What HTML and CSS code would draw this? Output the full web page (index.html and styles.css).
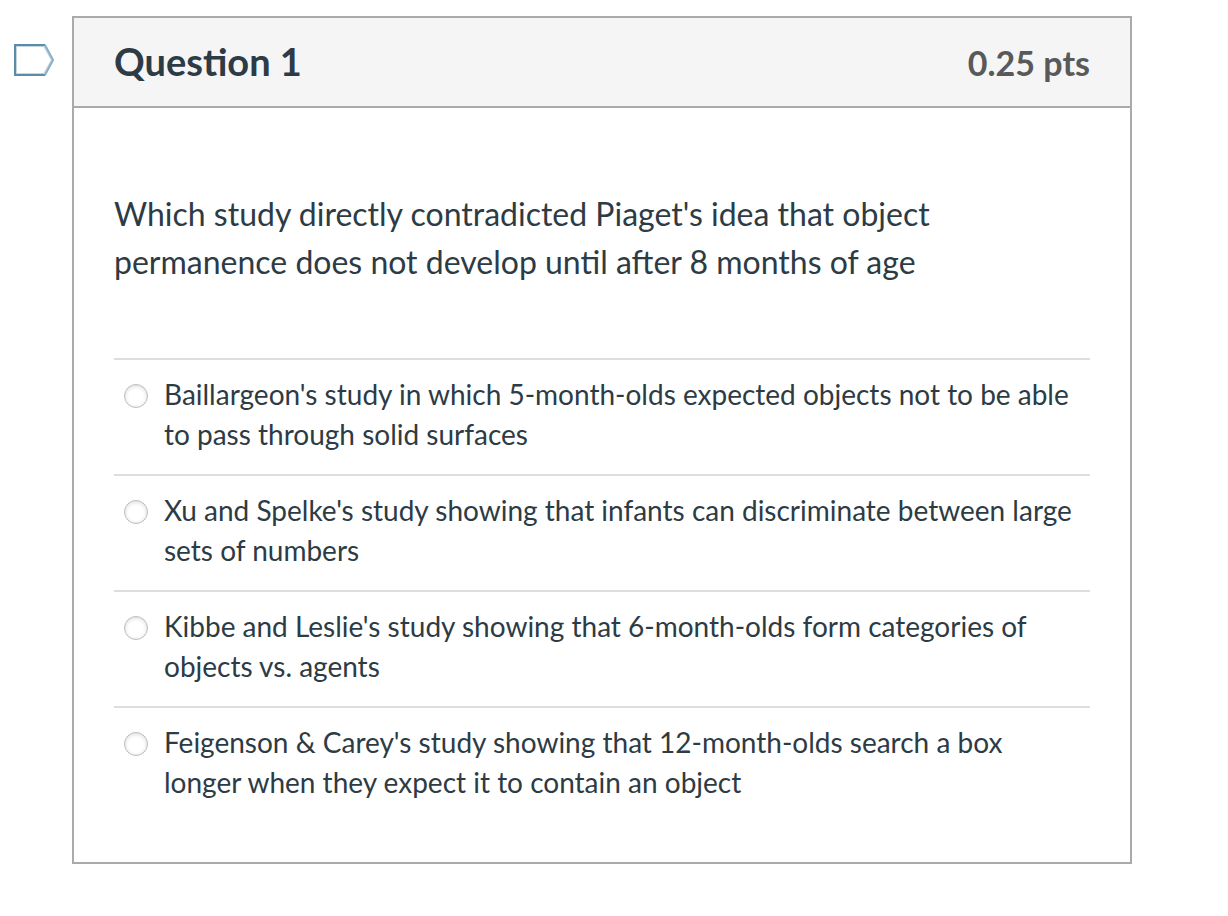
FILE: index.html
```html
<!DOCTYPE html>
<html lang="en">
<head>
<meta charset="UTF-8">
<meta name="viewport" content="width=device-width, initial-scale=1.0">
<title>Quiz</title>
<link rel="stylesheet" href="styles.css">
</head>
<body>
<main class="quiz">
    <button type="button" class="flag" aria-label="Flag question">
        <svg width="40" height="32" viewBox="0 0 40 32" fill="none">
            <path d="M1.5 1.5H30.5L38.5 16L30.5 30.5H1.5Z" stroke="#c3d6e1" stroke-width="3"/>
            <path d="M31 1H1V31H31" stroke="#5b8ba8" stroke-width="2"/>
            <path d="M31 1L39 16L31 31" stroke="#8fb0c4" stroke-width="2"/>
        </svg>
    </button>
    <form class="question">
        <header class="question-header">
            <h1>Question 1</h1>
            <span class="points">0.25 pts</span>
        </header>
        <div class="question-body">
            <p class="question-text" id="question_text">Which study directly contradicted Piaget's idea that object permanence does not develop until after 8 months of age</p>
            <div class="answers" role="radiogroup" aria-labelledby="question_text">
                <div class="answer">
                    <input type="radio" name="answer" id="answer_1">
                    <label for="answer_1">Baillargeon's study in which 5-month-olds expected objects not to be able to pass through solid surfaces</label>
                </div>
                <div class="answer">
                    <input type="radio" name="answer" id="answer_2">
                    <label for="answer_2">Xu and Spelke's study showing that infants can discriminate between large sets of numbers</label>
                </div>
                <div class="answer">
                    <input type="radio" name="answer" id="answer_3">
                    <label for="answer_3">Kibbe and Leslie's study showing that 6-month-olds form categories of objects vs. agents</label>
                </div>
                <div class="answer">
                    <input type="radio" name="answer" id="answer_4">
                    <label for="answer_4">Feigenson &amp; Carey's study showing that 12-month-olds search a box longer when they expect it to contain an object</label>
                </div>
            </div>
        </div>
    </form>
</main>
</body>
</html>
```
FILE: styles.css
```css
* {
    box-sizing: border-box;
}
body {
    font-family: Lato, "Liberation Sans", sans-serif;
    background-color: #fff;
    color: #2d3b45;
    margin: 0;
}
.quiz {
    display: flex;
    align-items: flex-start;
    gap: 18px;
    padding: 16px 96px 52px 14px;
}
.flag {
    flex: none;
    margin-top: 28px;
    padding: 0;
    border: none;
    background: none;
    cursor: pointer;
}
.flag svg {
    display: block;
}
.question {
    flex: 1;
    border: 2px solid #aaa;
}
.question-header {
    display: flex;
    justify-content: space-between;
    align-items: baseline;
    padding: 19px 40px 21px;
    background-color: #f5f5f5;
    border-bottom: 2px solid #aaa;
}
h1 {
    margin: 0;
    font-size: 38px;
    line-height: 48px;
}
.points {
    color: #595959;
    font-size: 34px;
    font-weight: bold;
    line-height: 40px;
}
.question-body {
    padding: 82px 40px 40px;
}
.question-text {
    margin: 0 0 72px;
    font-size: 32px;
    line-height: 48px;
}
.answer {
    display: flex;
    align-items: flex-start;
    gap: 16px;
    padding: 14px 10px 20px;
    border-top: 2px solid #ddd;
}
.answer input {
    appearance: none;
    flex: none;
    width: 24px;
    height: 24px;
    margin: 10px 0 0;
    border: 1px solid #bbb;
    border-radius: 50%;
    background-color: #fff;
    box-shadow: inset 0 1px 4px rgba(0, 0, 0, 0.15);
}
.answer input:checked {
    border: 7px solid #0374b5;
}
.answer label {
    font-size: 28px;
    line-height: 40px;
}
```
